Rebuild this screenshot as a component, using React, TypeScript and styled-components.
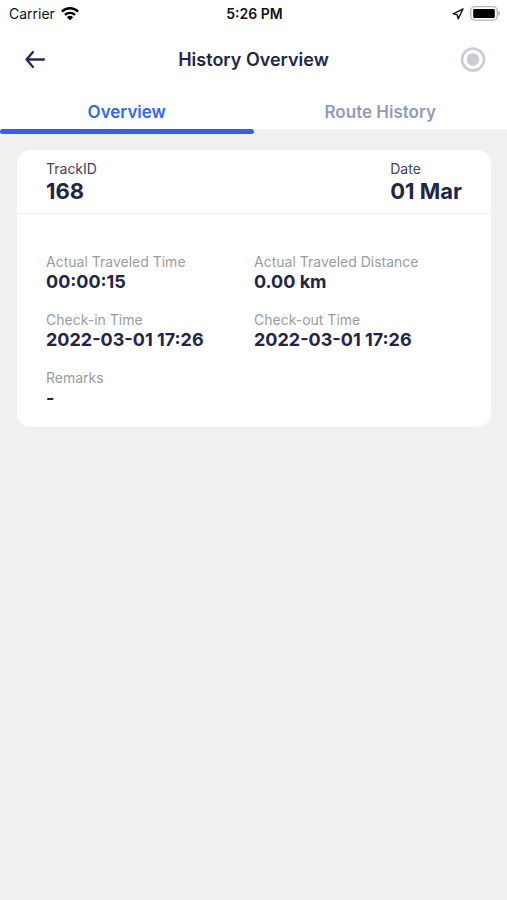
import React, { useState } from "react";
import styled, { createGlobalStyle } from "styled-components";

const GlobalStyle = createGlobalStyle`
  * { box-sizing: border-box; }
  body {
    margin: 0;
    background: #f0f0f0;
    color: #212647;
    font-family: Inter, "Liberation Sans", sans-serif;
  }
  button { font: inherit; border: 0; background: none; padding: 0; cursor: pointer; }
`;

const TopArea = styled.div`
  background: #fff;
`;

const StatusBar = styled.div`
  display: grid;
  grid-template-columns: 1fr auto 1fr;
  align-items: center;
  height: 28px;
  padding: 0 7px 0 9px;
  color: #111;
  font-size: 14px;
  line-height: 20px;
`;

const StatusGroup = styled.div<{ $end?: boolean }>`
  display: flex;
  align-items: center;
  justify-content: ${(p) => (p.$end ? "flex-end" : "flex-start")};
  gap: 6px;
`;

const Clock = styled.time`
  font-weight: 600;
`;

const Header = styled.header`
  display: grid;
  grid-template-columns: 1fr auto 1fr;
  align-items: center;
  height: 64px;
  padding: 0 21px;
`;

const Title = styled.h1`
  margin: 0;
  font-size: 18px;
  line-height: 24px;
  font-weight: 600;
`;

const IconButton = styled.button<{ $end?: boolean }>`
  display: flex;
  justify-self: ${(p) => (p.$end ? "end" : "start")};
`;

const Tabs = styled.div`
  display: grid;
  grid-template-columns: 1fr 1fr;
  height: 37px;
`;

const Tab = styled.button<{ $active: boolean }>`
  && {
    position: relative;
    height: 37px;
    padding-top: 3px;
    color: ${(p) => (p.$active ? "#3467f0" : "#929bbb")};
    font-size: 17px;
    line-height: 24px;
    font-weight: 600;
  }
  &::after {
    content: "";
    display: ${(p) => (p.$active ? "block" : "none")};
    position: absolute;
    top: 100%;
    left: 0;
    right: 0;
    height: 5px;
    border-radius: 3px;
    background: #2f61ee;
  }
`;

const Content = styled.main`
  padding: 21px 16px 21px 17px;
`;

const Card = styled.section`
  border-radius: 14px;
  background: #fff;
`;

const CardHead = styled.dl`
  display: flex;
  justify-content: space-between;
  margin: 0;
  padding: 10px 29px 9px;
  border-bottom: 1px solid #f0f1f2;
`;

const CardBody = styled.dl`
  display: grid;
  grid-template-columns: 1fr 1fr;
  row-gap: 18px;
  margin: 0;
  padding: 39px 29px 18px;
`;

const Label = styled.dt<{ $strong?: boolean }>`
  color: ${(p) => (p.$strong ? "#3f435d" : "#999ca1")};
  font-size: 14px;
  line-height: 18px;
`;

const Value = styled.dd<{ $large?: boolean }>`
  margin: 0;
  font-size: ${(p) => (p.$large ? 22 : 18)}px;
  line-height: ${(p) => (p.$large ? 26 : 22)}px;
  font-weight: 700;
`;

const details = [
  ["Actual Traveled Time", "00:00:15"],
  ["Actual Traveled Distance", "0.00 km"],
  ["Check-in Time", "2022-03-01 17:26"],
  ["Check-out Time", "2022-03-01 17:26"],
  ["Remarks", "-"],
];

const tabNames = ["Overview", "Route History"];

const WifiIcon = () => (
  <svg width="18" height="14" viewBox="0 0 18 14" aria-hidden="true">
    <g fill="none" stroke="#000" strokeWidth="2.4">
      <path d="M.9 4.6C5.4.2 12.6.2 17.1 4.6" />
      <path d="M3.9 7.9C6.8 5.2 11.2 5.2 14.1 7.9" />
    </g>
    <path d="M5.9 10.2Q9 7.5 12.1 10.2L9 13.3Z" fill="#000" />
  </svg>
);

const LocationIcon = () => (
  <svg width="12" height="12" viewBox="0 0 12 12" aria-hidden="true">
    <path d="M11 1 1.2 5.8 5.2 6.7 6.2 10.8Z" fill="none" stroke="#222" strokeWidth="1.5" strokeLinejoin="round" />
  </svg>
);

const BatteryIcon = () => (
  <svg width="30" height="16" viewBox="0 0 30 16" aria-hidden="true">
    <rect x=".7" y=".7" width="26.6" height="13.4" rx="4" fill="#fff" stroke="#b5b5b5" strokeWidth="1.3" />
    <rect x="3.2" y="2.9" width="21.6" height="9" rx="1" fill="#000" />
    <path d="M28.4 5Q30 5.7 30 7.4T28.4 9.8Z" fill="#aaa" />
  </svg>
);

const BackIcon = () => (
  <svg width="28" height="20" viewBox="0 0 28 20" aria-hidden="true">
    <path d="M23 9.5H5.5M12 2 5.5 9.5 12 17" fill="none" stroke="#252a59" strokeWidth="2.3" strokeLinecap="round" strokeLinejoin="round" />
  </svg>
);

const RecordIcon = () => (
  <svg width="26" height="26" viewBox="0 0 26 26" aria-hidden="true">
    <circle cx="13" cy="12.5" r="11" fill="none" stroke="#c9ccd3" strokeWidth="2.6" />
    <circle cx="13" cy="12.5" r="6.3" fill="#c9ccd3" />
  </svg>
);

export default function App() {
  const [active, setActive] = useState("Overview");
  return (
    <>
      <GlobalStyle />
      <TopArea>
        <StatusBar>
          <StatusGroup>
            <span>Carrier</span>
            <WifiIcon />
          </StatusGroup>
          <Clock>5:26 PM</Clock>
          <StatusGroup $end>
            <LocationIcon />
            <BatteryIcon />
          </StatusGroup>
        </StatusBar>
        <Header>
          <IconButton type="button" aria-label="Back">
            <BackIcon />
          </IconButton>
          <Title>History Overview</Title>
          <IconButton type="button" aria-label="Record" $end>
            <RecordIcon />
          </IconButton>
        </Header>
        <Tabs role="tablist">
          {tabNames.map((name) => (
            <Tab
              key={name}
              type="button"
              role="tab"
              aria-selected={name === active}
              $active={name === active}
              onClick={() => setActive(name)}
            >
              {name}
            </Tab>
          ))}
        </Tabs>
      </TopArea>
      <Content>
        <Card>
          <CardHead>
            <div>
              <Label $strong>TrackID</Label>
              <Value $large>168</Value>
            </div>
            <div>
              <Label $strong>Date</Label>
              <Value $large>01 Mar</Value>
            </div>
          </CardHead>
          <CardBody>
            {details.map(([label, value]) => (
              <div key={label}>
                <Label>{label}</Label>
                <Value>{value}</Value>
              </div>
            ))}
          </CardBody>
        </Card>
      </Content>
    </>
  );
}
